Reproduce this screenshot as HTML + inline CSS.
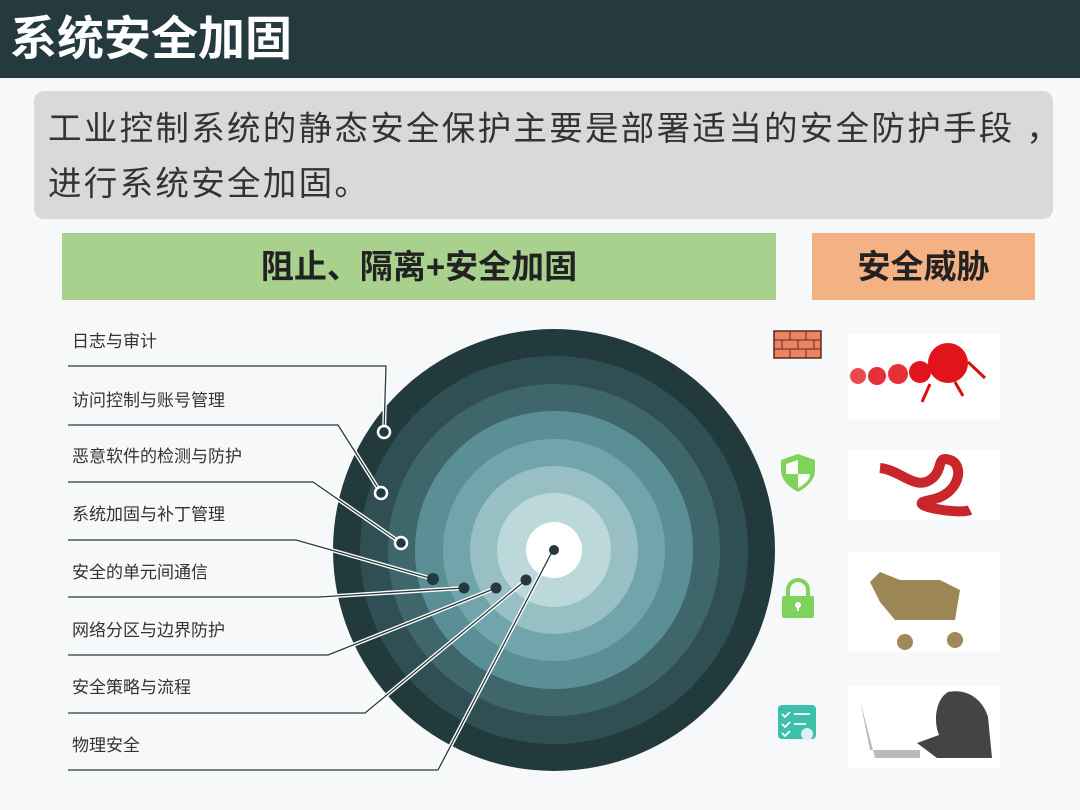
<!DOCTYPE html>
<html><head><meta charset="utf-8"><style>
body{margin:0;width:1080px;height:810px;background:#f7f8fa;font-family:"Liberation Sans","Noto Sans CJK SC",sans-serif;position:relative;overflow:hidden}
.hdr{position:absolute;left:0;top:0;width:1080px;height:78px;background:#243a3e;color:#fff;font-size:47px;font-weight:bold;line-height:78px;padding-left:10px;box-sizing:border-box}
.box{position:absolute;left:34px;top:91px;width:1019px;height:128px;background:#d9d9d9;border-radius:10px;color:#333;font-size:33.5px;line-height:55px;padding:11px 0 0 14px;box-sizing:border-box;white-space:nowrap;letter-spacing:2.3px}
.g{position:absolute;left:62px;top:233px;width:714px;height:67px;background:#a9d18e;text-align:center;line-height:67px;font-size:33px;font-weight:bold;color:#222}
.o{position:absolute;left:812px;top:233px;width:223px;height:67px;background:#f4b183;text-align:center;line-height:67px;font-size:33px;font-weight:bold;color:#222}
.l{position:absolute;left:72px;font-size:17px;color:#333}
</style></head><body>
<div class="hdr">系统安全加固</div>
<div class="box">工业控制系统的静态安全保护主要是部署适当的安全防护手段 ，<br>进行系统安全加固。</div>
<div class="g">阻止、隔离+安全加固</div>
<div class="o">安全威胁</div>
<div class="l" style="top:327px">日志与审计</div>
<div class="l" style="top:386px">访问控制与账号管理</div>
<div class="l" style="top:442px">恶意软件的检测与防护</div>
<div class="l" style="top:500px">系统加固与补丁管理</div>
<div class="l" style="top:558px">安全的单元间通信</div>
<div class="l" style="top:616px">网络分区与边界防护</div>
<div class="l" style="top:673px">安全策略与流程</div>
<div class="l" style="top:731px">物理安全</div>
<svg width="1080" height="810" style="position:absolute;left:0;top:0">
<circle cx="554" cy="550" r="221" fill="#233a3d"/>
<circle cx="554" cy="550" r="194" fill="#2f4f54"/>
<circle cx="554" cy="550" r="166" fill="#3e666b"/>
<circle cx="554" cy="550" r="139" fill="#5a8f95"/>
<circle cx="554" cy="550" r="111" fill="#71a5ab"/>
<circle cx="554" cy="550" r="84" fill="#98c0c4"/>
<circle cx="554" cy="550" r="57" fill="#bcd8da"/>
<circle cx="554" cy="550" r="28" fill="#fff"/>
<g fill="none" stroke-linejoin="round">
<g stroke="#fff" stroke-width="4">
<polyline points="386,366 384,432"/><polyline points="338,425 381,493"/><polyline points="313,482 401,543"/><polyline points="296,540 433,579"/><polyline points="320,597 464,588"/><polyline points="328,655 496,588"/><polyline points="365,713 526,580"/><polyline points="438,770 553,550"/>
</g>
<g stroke="#2a3a3d" stroke-width="1.3">
<polyline points="68,366 386,366 384,432"/><polyline points="68,425 338,425 381,493"/><polyline points="68,482 313,482 401,543"/><polyline points="68,540 296,540 433,579"/><polyline points="68,597 320,597 464,588"/><polyline points="68,655 328,655 496,588"/><polyline points="68,713 365,713 526,580"/><polyline points="68,770 438,770 553,550"/>
</g></g>
<g stroke="#fff" stroke-width="2.5" fill="#233a3d">
<circle cx="384" cy="432" r="6"/><circle cx="381" cy="493" r="6"/><circle cx="401" cy="543" r="6"/>
</g>
<g fill="#243a3e"><circle cx="433" cy="579" r="6"/><circle cx="464" cy="588" r="5.5"/><circle cx="496" cy="588" r="5.5"/><circle cx="526" cy="580" r="5.5"/><circle cx="554" cy="550" r="5"/></g>
<rect x="774" y="331" width="47" height="27" fill="#ec8362" stroke="#5a2a1a" stroke-width="1.5"/>
<path d="M774 340H821M774 349H821M790 331V340M806 331V340M782 340V349M798 340V349M814 340V349M790 349V358M806 349V358" stroke="#5a2a1a" stroke-width="1"/>
<path d="M798 454l17 6v10c0 10-8 17-17 22-9-5-17-12-17-22v-10z" fill="#7ed35a"/>
<path d="M798 460v14h12c0 6-5 10-12 14v-14h-12v-10z" fill="#fff"/>
<rect x="782" y="596" width="32" height="22" rx="2" fill="#7ed35a"/>
<path d="M788 597v-7a10 10 0 0 1 20 0v7" stroke="#7ed35a" stroke-width="4" fill="none"/>
<circle cx="798" cy="605" r="3" fill="#fff"/><rect x="797" y="605" width="2" height="6" fill="#fff"/>
<rect x="778" y="705" width="38" height="34" rx="4" fill="#3cc0aa"/>
<path d="M782 714l3 3 5-5M782 724l3 3 5-5M782 733l3 3 5-5M794 714h16M794 724h12" stroke="#fff" stroke-width="1.8" fill="none"/>
<circle cx="807" cy="734" r="6" fill="#dfeff3"/>
<rect x="848" y="334" width="152" height="86" fill="#fff"/>
<circle cx="948" cy="363" r="20" fill="#e0141a"/><circle cx="920" cy="372" r="11" fill="#e0141a"/><circle cx="898" cy="374" r="10" fill="#e43036"/><circle cx="877" cy="376" r="9" fill="#e43036"/><circle cx="858" cy="376" r="8" fill="#e84a4e"/>
<path d="M968 362L985 378M930 384l-8 18M955 382l8 14" stroke="#d81010" stroke-width="3"/>
<rect x="848" y="450" width="152" height="70" fill="#fff"/>
<path d="M880 468C900 470 915 490 930 480S935 455 950 460S960 495 930 500S960 515 970 510" stroke="#c8262a" stroke-width="10" fill="none"/>
<rect x="848" y="552" width="152" height="100" fill="#fff"/>
<path d="M870 582l10-10 20 8h40l20 10-5 30h-60l-15-18z" fill="#9c8654"/>
<circle cx="905" cy="642" r="8" fill="#a08858"/><circle cx="955" cy="640" r="8" fill="#a08858"/>
<rect x="848" y="686" width="152" height="82" fill="#fff"/>
<path d="M860 700l10 50h50v8h-45z" fill="#bbb"/>
<path d="M948 692c20-4 35 8 40 25l4 41h-55l-20-15 22-8c-6-15-3-36 9-43z" fill="#444"/>
</svg>
</body></html>
